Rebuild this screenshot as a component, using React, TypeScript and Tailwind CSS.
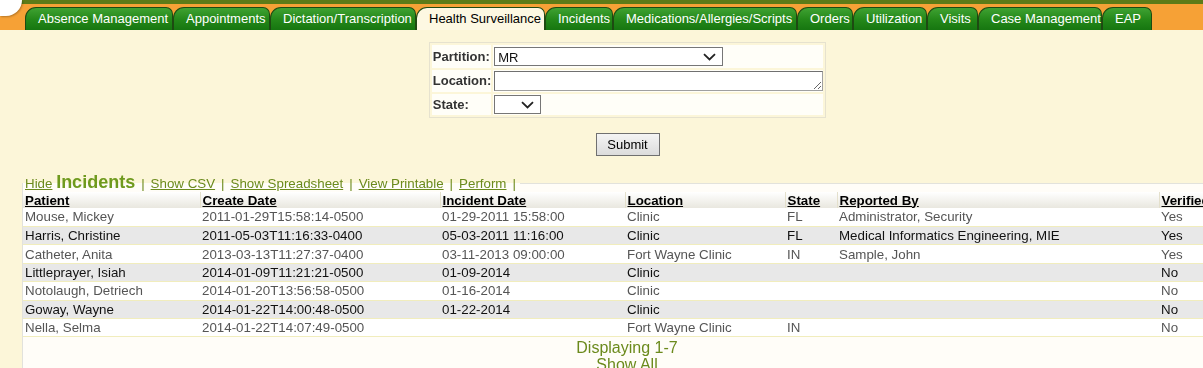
import React from 'react'

const tabs = [
  { label: 'Absence Management', w: 148 },
  { label: 'Appointments', w: 97 },
  { label: 'Dictation/Transcription', w: 146 },
  { label: 'Health Surveillance', w: 129, active: true },
  { label: 'Incidents', w: 68 },
  { label: 'Medications/Allergies/Scripts', w: 184 },
  { label: 'Orders', w: 56 },
  { label: 'Utilization', w: 74 },
  { label: 'Visits', w: 51 },
  { label: 'Case Management', w: 124 },
  { label: 'EAP', w: 50 },
]

const rows = [
  ['Mouse, Mickey', '2011-01-29T15:58:14-0500', '01-29-2011 15:58:00', 'Clinic', 'FL', 'Administrator, Security', 'Yes'],
  ['Harris, Christine', '2011-05-03T11:16:33-0400', '05-03-2011 11:16:00', 'Clinic', 'FL', 'Medical Informatics Engineering, MIE', 'Yes'],
  ['Catheter, Anita', '2013-03-13T11:27:37-0400', '03-11-2013 09:00:00', 'Fort Wayne Clinic', 'IN', 'Sample, John', 'Yes'],
  ['Littleprayer, Isiah', '2014-01-09T11:21:21-0500', '01-09-2014', 'Clinic', '', '', 'No'],
  ['Notolaugh, Detriech', '2014-01-20T13:56:58-0500', '01-16-2014', 'Clinic', '', '', 'No'],
  ['Goway, Wayne', '2014-01-22T14:00:48-0500', '01-22-2014', 'Clinic', '', '', 'No'],
  ['Nella, Selma', '2014-01-22T14:07:49-0500', '', 'Fort Wayne Clinic', 'IN', '', 'No'],
]

const columns = ['Patient', 'Create Date', 'Incident Date', 'Location', 'State', 'Reported By', 'Verified']
const colWidths = [177, 240, 185, 160, 52, 322, 80]

function Chevron() {
  return (
    <svg width="13" height="8" viewBox="0 0 13 8" className="pointer-events-none absolute right-[7px] top-1/2 -translate-y-1/2">
      <path d="M1 1.2 L6.5 6.5 L12 1.2" fill="none" stroke="#222" strokeWidth="1.8" />
    </svg>
  )
}

export default function App() {
  return (
    <div className="w-[1203px] h-[368px] overflow-hidden bg-[#fcf6d9] text-[13px] text-[#222] font-['Liberation_Sans',Arial,sans-serif]">
      {/* Header bar */}
      <div className="relative h-[30px] bg-[#f6a136] border-t-[4px] border-[#5c7b18]">
        <div className="absolute left-0 top-[-4px] w-[22px] h-[16px] bg-white rounded-br-[22px] shadow-[1px_1px_2px_rgba(0,0,0,0.25)]" />
        <div className="flex items-end h-full pl-[25px] pt-[3px]">
          {tabs.map(t => (
            <div
              key={t.label}
              style={{ width: t.w }}
              className={`h-[23px] flex items-center pl-[12px] whitespace-nowrap rounded-tl-[11px] rounded-tr-[7px] border border-b-0 border-[#1e4a12] ${
                t.active
                  ? 'bg-[#fdf8e2] text-black relative z-10'
                  : 'bg-linear-to-b from-[#3fa232] via-[#25891a] to-[#167610] text-white'
              }`}
            >
              {t.label}
            </div>
          ))}
        </div>
      </div>

      {/* Content */}
      <div className="pl-[22px]">
        <div className="w-[1211px]">
          {/* Search form */}
          <div className="flex justify-center pt-[12px]">
            <table className="w-[397px] border-separate border-spacing-[2px] bg-[#fcf6d9] border border-[#e6e2cf]">
              <tbody>
                <tr>
                  <td className="w-[61px] h-[23px] bg-[#fffef8] pl-[1px] font-bold text-[#333]">Partition:</td>
                  <td className="bg-[#fffef8] pl-[1px]">
                    <div className="relative w-[229px] h-[19px]">
                      <select className="appearance-none w-full h-full border border-[#767676] bg-white pl-[3px] text-[13px] text-[#111] outline-none">
                        <option>MR</option>
                      </select>
                      <Chevron />
                    </div>
                  </td>
                </tr>
                <tr>
                  <td className="h-[22px] bg-[#fffef8] pl-[1px] font-bold text-[#333]">Location:</td>
                  <td className="bg-[#fffef8] pl-[1px]">
                    <textarea className="block w-[329px] h-[20px] border border-[#a0a0a0] border-t-[#707070] border-l-[#707070] bg-white resize" rows={1} />
                  </td>
                </tr>
                <tr>
                  <td className="h-[21px] bg-[#fffef8] pl-[1px] font-bold text-[#333]">State:</td>
                  <td className="bg-[#fffef8] pl-[1px]">
                    <div className="relative w-[47px] h-[19px]">
                      <select className="appearance-none w-full h-full border border-[#767676] bg-white outline-none">
                        <option></option>
                      </select>
                      <Chevron />
                    </div>
                  </td>
                </tr>
              </tbody>
            </table>
          </div>

          <div className="flex justify-center pt-[15px]">
            <button className="w-[64px] h-[23px] border border-[#707070] bg-linear-to-b from-[#f4f4f4] to-[#dcdcdc] text-[13px] text-black">
              Submit
            </button>
          </div>

          {/* Incidents section */}
          <fieldset className="mt-[18px] border-t border-l border-[#e2e2dc] bg-[#fffdf8] pb-[40px] text-[13.33px]">
            <legend className="pl-[2px] pr-[4px] text-[#6b8a1c] leading-[17px]">
              <a className="underline">Hide</a>{' '}
              <span className="text-[18px] font-bold text-[#6f9a1e]">Incidents</span>
              <span className="px-[6px]">|</span>
              <a className="underline">Show CSV</a>
              <span className="px-[6px]">|</span>
              <a className="underline">Show Spreadsheet</a>
              <span className="px-[6px]">|</span>
              <a className="underline">View Printable</a>
              <span className="px-[6px]">|</span>
              <a className="underline">Perform</a>
              <span className="pl-[6px]">|</span>
            </legend>
            <table className="table-fixed border-collapse w-[1216px]">
              <colgroup>
                {colWidths.map((w, i) => (
                  <col key={i} style={{ width: w }} />
                ))}
              </colgroup>
              <thead>
                <tr className="bg-linear-to-b from-white to-[#e9e7df]">
                  {columns.map((c, i) => (
                    <th
                      key={c}
                      className={`h-[16px] pl-[2px] text-left font-bold text-black underline leading-[15px] ${i > 0 ? 'border-l border-[#e4e0cc]' : ''}`}
                    >
                      {c}
                    </th>
                  ))}
                </tr>
              </thead>
              <tbody>
                {rows.map((r, ri) => (
                  <tr
                    key={ri}
                    className={`border-b border-[#f1edbd] ${ri % 2 === 1 ? 'bg-[#e8e8e8] text-[#111]' : 'bg-white text-[#555]'}`}
                  >
                    {r.map((cell, ci) => (
                      <td key={ci} className="h-[18.43px] pl-[2px] leading-[15px] whitespace-nowrap">
                        {cell}
                      </td>
                    ))}
                  </tr>
                ))}
              </tbody>
            </table>
            <div className="text-center text-[16px] leading-[17px] text-[#6b8a1c] pt-[2px] pr-[8px]">
              <div>Displaying 1-7</div>
              <div>Show All</div>
            </div>
          </fieldset>
        </div>
      </div>
    </div>
  )
}
